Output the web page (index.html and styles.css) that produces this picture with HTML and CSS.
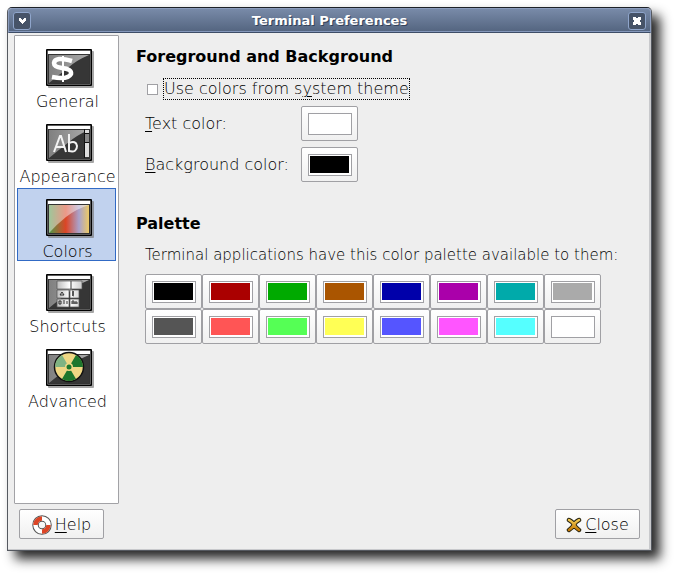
FILE: index.html
```html
<!DOCTYPE html>
<html lang="en">
<head>
<meta charset="utf-8">
<title>Terminal Preferences</title>
<link rel="stylesheet" href="styles.css">
</head>
<body>
<svg class="defs" width="0" height="0" aria-hidden="true">
  <defs>
    <linearGradient id="glass" x1="0" y1="0" x2="1" y2="0"><stop offset="0" stop-color="#808080"/><stop offset="1" stop-color="#aaa"/></linearGradient>
    <linearGradient id="rainbow"><stop offset="0" stop-color="#4f9848"/><stop offset=".42" stop-color="#dc4526"/><stop offset=".75" stop-color="#a9a2cc"/><stop offset="1" stop-color="#ecc966"/></linearGradient>
    <linearGradient id="key"><stop offset="0" stop-color="#bbb"/><stop offset=".5" stop-color="#fff"/><stop offset="1" stop-color="#ccc"/></linearGradient>
    <linearGradient id="gold" x2="0" y2="1"><stop offset="0" stop-color="#f4c951"/><stop offset="1" stop-color="#c47a05"/></linearGradient>
    <g id="screen">
      <rect x="2" y="2" width="46" height="37" rx="1" fill="#777" opacity=".65"/>
      <rect x="0" y="0" width="46" height="37" rx="1" fill="#000"/>
      <rect x="1.500" y="1.500" width="43" height="34" fill="#b5b5b5"/>
      <rect x="2" y="2" width="42" height="3" fill="#fff"/>
      <rect x="2.500" y="5.500" width="41" height="29" fill="#363636" stroke="#333"/>
      <path d="M3 6H43Q31 11 23 18Q14 25 3 34Z" fill="url(#glass)"/>
    </g>
  </defs>
</svg>
<main class="window">
  <header class="titlebar">
    <button class="title-button" aria-label="Window menu"><svg width="9" height="7"><path d="M1 1h2v1h1v1h1V2h1V1h2v3H7v1H6v1H5v1H4V6H3V5H2V4H1z" fill="#fff"/></svg></button>
    <h1>Terminal Preferences</h1>
    <button class="title-button" aria-label="Close window"><svg width="8" height="8"><path d="M0 0h3v1h2V0h3v3H7v2h1v3H5V7H3v1H0V5h1V3H0z" fill="#fff"/></svg></button>
  </header>
  <div class="body">
    <nav class="sections">
      <button class="section"><svg width="48" height="40"><use href="#screen"/><path d="M26 12Q9 7 8 14Q8 18 16 19Q26 20 25 25Q22 31 6 28" fill="none" stroke="#fff" stroke-width="4.500"/><path d="M17 7V33" stroke="#fff" stroke-width="2"/></svg><span>General</span></button>
      <button class="section"><svg width="48" height="40"><use href="#screen"/><path d="M8 28L14 12h1l5 16M10 23h8M23 10v17q8 2 8-5q-1-6-8-3" fill="none" stroke="#f2f2f2" stroke-width="2"/><path d="M38.500 5V34M39 9.500h4M39 18.500h4" stroke="#111"/><path d="M39 6h4v3h-4zM39 19h4v14h-4z" fill="#ddd"/><path d="M39 10h4v8h-4z" fill="#888"/></svg><span>Appearance</span></button>
      <button class="section selected" aria-current="true"><svg width="48" height="40"><use href="#screen"/><rect x="3" y="6" width="40" height="28" fill="url(#rainbow)"/><path d="M3 6H43Q30 10 20 18Q10 26 3 34Z" fill="#fff" opacity=".45"/></svg><span>Colors</span></button>
      <button class="section"><svg width="48" height="40"><use href="#screen"/><path d="M11 7h14v8H11zM25 7h11v8H25zM11 16h12v8H11zM24 16h9v8h-9zM11 25h12v8H11zM24 25h9v8h-9z" fill="url(#key)" stroke="#555" stroke-width=".7"/><path d="M14 21l2-3 2 3zM26 17l2 1-2 1 2 1-2 1 2 1M13 27v3h2v-3zm4 0h2m-2 2h2m2-2v3M26 30v-3h2v3m2-3v3m-4-1h6" fill="none" stroke="#333"/></svg><span>Shortcuts</span></button>
      <button class="section"><svg width="48" height="40"><use href="#screen"/><circle cx="23" cy="18" r="14.500" fill="#efd784" stroke="#111" stroke-width="1.500"/><path d="M23 18L16 30.100A14 14 0 0 0 30 30.100ZM23 18H37A14 14 0 0 0 30 5.900Z" fill="#1d762c"/><path d="M23 18H9A14 14 0 0 1 16 5.900Z" fill="#7fb383"/><circle cx="23" cy="18" r="4" fill="#efd784"/><circle cx="23" cy="18" r="2.500" fill="#1d762c"/></svg><span>Advanced</span></button>
    </nav>
    <section class="panel">
      <h2>Foreground and Background</h2>
      <div class="check-row"><input type="checkbox" id="system"><label for="system">Use colors from s<u>y</u>stem theme</label></div>
      <div class="colors">
        <label for="text-color"><u>T</u>ext color:</label><input type="color" id="text-color" value="#ffffff">
        <label for="background-color"><u>B</u>ackground color:</label><input type="color" id="background-color" value="#000000">
      </div>
      <h2>Palette</h2>
      <p>Terminal applications have this color palette available to them:</p>
      <div class="palette">
        <input type="color" aria-label="Black" value="#000000">
        <input type="color" aria-label="Red" value="#aa0000">
        <input type="color" aria-label="Green" value="#00aa00">
        <input type="color" aria-label="Brown" value="#aa5500">
        <input type="color" aria-label="Blue" value="#0000aa">
        <input type="color" aria-label="Magenta" value="#aa00aa">
        <input type="color" aria-label="Cyan" value="#00aaaa">
        <input type="color" aria-label="Light gray" value="#aaaaaa">
        <input type="color" aria-label="Dark gray" value="#555555">
        <input type="color" aria-label="Light red" value="#ff5555">
        <input type="color" aria-label="Light green" value="#55ff55">
        <input type="color" aria-label="Yellow" value="#ffff55">
        <input type="color" aria-label="Light blue" value="#5555ff">
        <input type="color" aria-label="Light magenta" value="#ff55ff">
        <input type="color" aria-label="Light cyan" value="#55ffff">
        <input type="color" aria-label="White" value="#ffffff">
      </div>
    </section>
  </div>
  <footer class="actions">
    <button class="action"><svg width="20" height="20"><circle cx="10" cy="10" r="6.500" fill="none" stroke="#555" stroke-width="6.500"/><circle cx="10" cy="10" r="6.500" fill="none" stroke="#fff" stroke-width="4.500"/><path d="M3.500 10A6.500 6.500 0 0 1 10 3.500M16.500 10A6.500 6.500 0 0 1 10 16.500" fill="none" stroke="#dc4526" stroke-width="4.500"/></svg><span><u>H</u>elp</span></button>
    <button class="action"><svg width="16" height="16"><path d="M3 3Q7 5 8 8Q10 11 13 13M13 3Q9 5 8 8Q6 11 3 13" fill="none" stroke="#282410" stroke-width="4.500" stroke-linecap="round"/><path d="M3 3Q7 5 8 8Q10 11 13 13M13 3Q9 5 8 8Q6 11 3 13" fill="none" stroke="url(#gold)" stroke-width="2.500" stroke-linecap="round"/></svg><span><u>C</u>lose</span></button>
  </footer>
</main>
</body>
</html>
```
FILE: styles.css
```css
* { box-sizing: border-box; }
body {
  margin: 0;
  padding: 7px 23px 23px 7px;
  min-height: 100vh;
  display: flex;
  background: #fff;
  color: #000;
  font: 200 16px/20px "DejaVu Sans Light", "DejaVu Sans", sans-serif;
}
button { font: inherit; color: inherit; }
h1, h2, p { margin: 0; }
svg { display: block; flex: none; }
.defs { position: absolute; }
u { text-decoration-thickness: 1px; text-underline-offset: 2px; }
.window {
  flex: 1;
  display: flex;
  flex-direction: column;
  background: #eee;
  border: 1px solid #555960;
  border-top-color: #1d2128;
  border-radius: 5px 5px 0 0;
  box-shadow: inset -2px -1px #c8c9cc, 8px 8px 12px rgba(0, 0, 0, .85);
}
.titlebar {
  height: 25px;
  display: flex;
  align-items: center;
  justify-content: space-between;
  padding: 0 4px;
  background: linear-gradient(#788aa8, #53647f);
  border: 1px solid #8b9cbd;
  border-bottom: 1px solid #3d4d67;
  border-radius: 4px 4px 0 0;
  box-shadow: inset 0 -1px #8497ba;
}
.titlebar h1 {
  font: bold 13px/20px "DejaVu Sans", sans-serif;
  color: #fff;
  text-shadow: 1px 1px #34425a;
}
.title-button {
  width: 18px;
  height: 18px;
  padding: 0;
  display: grid;
  place-items: center;
  background: #465368;
  border: 1px solid #8fa5cb;
  border-radius: 3px;
}
.body { flex: 1; display: flex; gap: 17px; padding: 2px 6px 5px; }
.sections {
  width: 105px;
  flex: none;
  display: flex;
  flex-direction: column;
  gap: 2px;
  padding: 2px 1px;
  background: #fff;
  border: 1px solid #a2a2a6;
  border-radius: 1px;
}
.section {
  height: 73px;
  margin: 0 1px;
  padding: 10px 0 0 2px;
  display: flex;
  flex-direction: column;
  align-items: center;
  gap: 3px;
  background: none;
  border: 1px solid transparent;
}
.section svg { margin-left: 5px; }
.selected { background: #c1d2ee; border-color: #316ac5; }
.panel { flex: 1; padding-top: 12px; }
h2 { font: bold 16px/20px "DejaVu Sans", sans-serif; }
.check-row { display: flex; align-items: center; gap: 5px; padding: 11px 0 6px 11px; }
.check-row label { border: 1px dotted #000; }
input { margin: 0; appearance: none; }
[type="checkbox"] { width: 11px; height: 11px; background: #fff; border: 1px solid #a0a0a4; }
.colors {
  display: grid;
  grid-template-columns: 156px 57px;
  row-gap: 6px;
  align-items: center;
  padding: 0 0 32px 9px;
}
.panel p { padding: 11px 0 9px 9px; font-size: 15px; }
.palette { display: grid; grid-template-columns: repeat(8, 57px); padding-left: 9px; }
[type="color"] {
  width: 57px;
  height: 35px;
  padding: 6px 5px 5px 6px;
  background: linear-gradient(#fff, #f0f0f0);
  border: 1px solid #a0a0a4;
  border-radius: 2px;
}
::-webkit-color-swatch-wrapper {
  padding: 1px 2px 2px 1px;
  background: #fff;
  border: 1px solid #a0a0a4;
}
::-webkit-color-swatch { border: 0; border-radius: 0; }
.actions { display: flex; justify-content: space-between; padding: 0 11px 11px; }
.action {
  width: 85px;
  height: 30px;
  padding: 1px 0 0;
  display: flex;
  align-items: center;
  justify-content: center;
  gap: 3px;
  background: linear-gradient(#fff, #f0f0f0);
  border: 1px solid #a0a0a4;
  border-radius: 2px;
}
```
